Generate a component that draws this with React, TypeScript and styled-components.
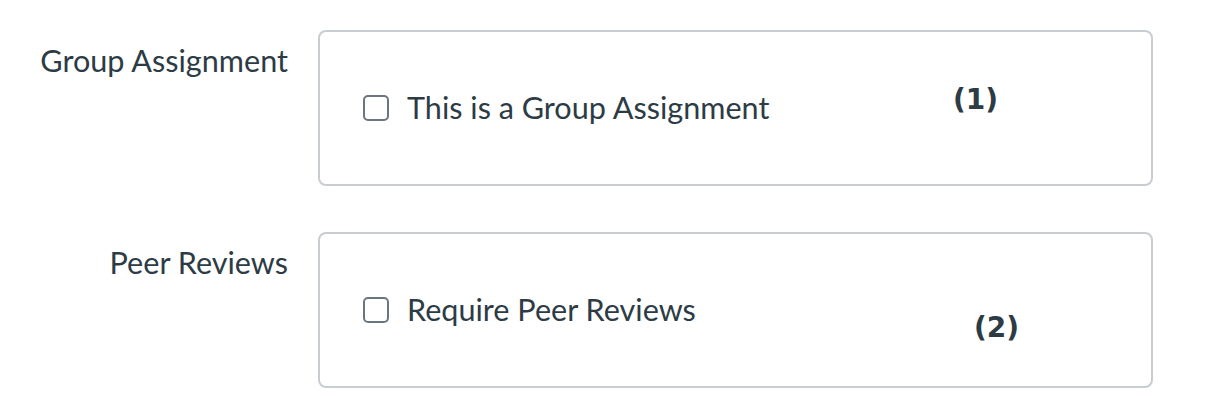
import React from "react";
import styled, { createGlobalStyle } from "styled-components";

const Global = createGlobalStyle`
  html, body { margin: 0; padding: 0; background: #ffffff; }
  body { font-family: Lato, "Noto Sans", sans-serif; color: #2d3b45; }
`;

const Page = styled.div`
  display: grid;
  grid-template-columns: 288px 835px;
  column-gap: 30px;
  row-gap: 46px;
  padding-top: 30px;
`;

const Label = styled.div`
  text-align: right;
  font-size: 30.6px;
  line-height: 1.2;
  padding-top: 13px;
  color: #2d3b45;
`;

const Panel = styled.div`
  position: relative;
  box-sizing: border-box;
  height: 156px;
  border: 2px solid #c7cdd1;
  border-radius: 8px;
  display: flex;
  align-items: center;
  padding-left: 43px;
`;

const CheckRow = styled.label`
  display: flex;
  align-items: center;
  gap: 18px;
  font-size: 30.6px;
  line-height: 1.2;
  color: #2d3b45;
  cursor: pointer;
`;

const Box = styled.span`
  box-sizing: border-box;
  width: 26px;
  height: 26px;
  border: 2px solid #6b7780;
  border-radius: 5px;
  background: #fff;
  flex: none;
`;

const Marker = styled.span<{ $left: number; $top: number }>`
  position: absolute;
  left: ${(p) => p.$left}px;
  top: ${(p) => p.$top}px;
  font-family: "DejaVu Sans", sans-serif;
  font-weight: bold;
  font-size: 28px;
  line-height: 1;
  color: #2d3b45;
`;

export default function App() {
  return (
    <>
      <Global />
      <Page>
        <Label>Group Assignment</Label>
        <Panel>
          <CheckRow>
            <Box />
            This is a Group Assignment
          </CheckRow>
          <Marker $left={633} $top={54}>(1)</Marker>
        </Panel>
        <Label>Peer Reviews</Label>
        <Panel>
          <CheckRow>
            <Box />
            Require Peer Reviews
          </CheckRow>
          <Marker $left={654} $top={80}>(2)</Marker>
        </Panel>
      </Page>
    </>
  );
}
